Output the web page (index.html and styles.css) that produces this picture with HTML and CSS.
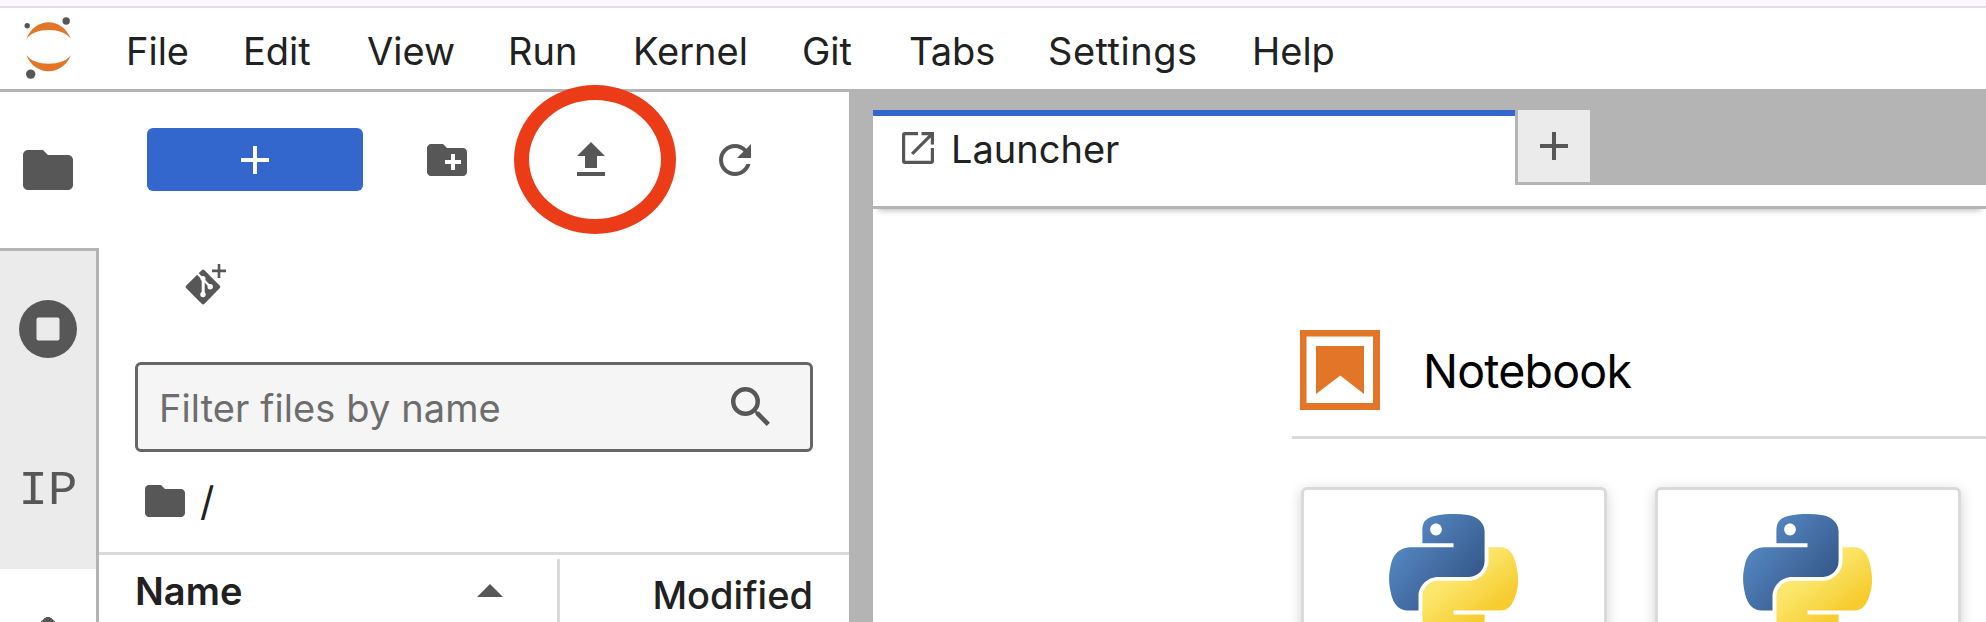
FILE: index.html
```html
<!DOCTYPE html>
<html lang="en">
<head>
<meta charset="utf-8">
<title>JupyterLab</title>
<link rel="stylesheet" href="styles.css">
</head>
<body>
<svg class="defs" width="0" height="0">
  <defs>
    <linearGradient id="blue" gradientUnits="userSpaceOnUse" x1="5" y1="8" x2="72" y2="64"><stop offset="0" stop-color="#5a8fca"/><stop offset="1" stop-color="#34578a"/></linearGradient>
    <linearGradient id="yellow" gradientUnits="userSpaceOnUse" x1="50" y1="58" x2="76" y2="92"><stop offset="0" stop-color="#fbe76d"/><stop offset="1" stop-color="#f6cc2f"/></linearGradient>
    <symbol id="python" viewBox="0 0 111 112">
      <path fill="url(#blue)" d="M54.919 0C50.335.022 45.958.413 42.106 1.095 30.76 3.099 28.7 7.295 28.7 15.032v10.219h26.813v3.406H18.638c-7.793 0-14.616 4.684-16.75 13.594-2.462 10.213-2.571 16.586 0 27.25 1.906 7.938 6.457 13.594 14.25 13.594h9.218v-12.25c0-8.85 7.657-16.656 16.75-16.656h26.782c7.455 0 13.406-6.139 13.406-13.625V15.032c0-7.266-6.13-12.725-13.406-13.937C64.282.328 59.502-.02 54.919 0zm-14.5 8.22c2.769 0 5.031 2.298 5.031 5.124 0 2.817-2.262 5.094-5.031 5.094-2.78 0-5.032-2.277-5.032-5.094 0-2.826 2.252-5.125 5.032-5.125z"/>
      <path fill="url(#yellow)" d="M85.638 28.657v11.906c0 9.231-7.826 17-16.75 17H42.106c-7.336 0-13.406 6.279-13.406 13.625V96.72c0 7.266 6.319 11.54 13.406 13.625 8.488 2.495 16.627 2.946 26.782 0 6.750-1.955 13.406-5.888 13.406-13.625V86.5H55.513v-3.406H95.7c7.792 0 10.696-5.435 13.406-13.594 2.8-8.399 2.68-16.476 0-27.25-1.926-7.757-5.604-13.593-13.406-13.593z"/>
    </symbol>
    <symbol id="folder" viewBox="2 4 20 16"><path d="M10 4H4c-1.100 0-1.990.9-1.990 2L2 18c0 1.100.9 2 2 2h16c1.100 0 2-.9 2-2V8c0-1.100-.9-2-2-2h-8l-2-2z"/></symbol>
  </defs>
</svg>
<div class="app">
  <div class="browser-edge"></div>
  <header class="menubar">
    <svg class="logo" viewBox="0 0 60 70">
      <path fill="#e27528" d="M6.300 26C10.500 15.500 19 9.300 28.600 9.300S46.700 15.500 51 26C46.500 20 38.500 17 28.600 17S11 20 6.300 26zM6.300 42C10.500 52.500 19 58.200 28.600 58.200S46.700 52.500 51 42C46.500 48 38.500 50.700 28.600 50.700S11 48 6.300 42z"/>
      <g fill="#575757"><circle cx="46.200" cy="8" r="3.700"/><circle cx="7.200" cy="12.700" r="2.700"/><circle cx="10.700" cy="61.100" r="4.700"/></g>
    </svg>
    <nav class="menu"><span class="m-file">File</span><span class="m-edit">Edit</span><span class="m-view">View</span><span class="m-run">Run</span><span class="m-kernel">Kernel</span><span class="m-git">Git</span><span class="m-tabs">Tabs</span><span class="m-settings">Settings</span><span class="m-help">Help</span></nav>
  </header>
  <main class="body">
    <aside class="rail">
      <div class="rail-item active"><svg class="ico rail-folder"><use href="#folder"/></svg></div>
      <div class="rail-item stop"><svg class="ico rail-stop" viewBox="0 0 58 58"><circle cx="29" cy="29" r="29"/><rect x="17.500" y="17.500" width="23" height="23" rx="2" fill="#ebebeb"/></svg></div>
      <div class="rail-item ip">IP</div>
      <div class="rail-item git"><svg class="ico rail-git" viewBox="2 2 20 20"><path d="M10.590 2.600c.78-.79 2.040-.79 2.820 0l7.990 7.990c.79.78.79 2.040 0 2.820l-7.990 7.990c-.78.79-2.040.79-2.820 0L2.600 13.410c-.79-.78-.79-2.040 0-2.820z"/></svg></div>
    </aside>
    <section class="files">
      <div class="toolbar">
        <button class="new"><svg viewBox="0 0 28 28"><path d="M12 0h4v12h12v4H16v12h-4V16H0v-4h12z"/></svg></button>
        <svg class="ico new-folder" viewBox="2 4 20 16"><path d="M20 6h-8l-2-2H4c-1.110 0-1.990.89-1.990 2L2 18c0 1.110.89 2 2 2h16c1.110 0 2-.89 2-2V8c0-1.110-.89-2-2-2zm-1 8h-3v3h-2v-3h-3v-2h3V9h2v3h3v2z"/></svg>
        <div class="upload"><svg class="ico" viewBox="5 3 14 17"><path d="M9 16h6v-6h4l-7-7-7 7h4zm-4 2h14v2H5z"/></svg><div class="highlight"></div></div>
        <svg class="ico refresh" viewBox="4 4 16 16"><path d="M17.650 6.350C16.200 4.900 14.210 4 12 4c-4.420 0-7.990 3.580-7.990 8s3.570 8 7.990 8c3.730 0 6.840-2.550 7.730-6h-2.080c-.82 2.330-3.040 4-5.650 4-3.310 0-6-2.690-6-6s2.690-6 6-6c1.660 0 3.140.69 4.220 1.780L13 11h7V4l-2.350 2.350z"/></svg>
      </div>
      <svg class="ico git-add" viewBox="0 0 42 42">
        <path d="M16.700 6.300a2 2 0 0 1 2.800 0L34.600 21.400a2 2 0 0 1 0 2.800L19.500 39.700a2 2 0 0 1-2.800 0L1.300 24.200a2 2 0 0 1 0-2.800z"/>
        <g fill="none" stroke="#fff" stroke-width="2.300"><path d="M11.500 8.500 25 22.500"/><path stroke-width="3" d="M18.200 14v16"/></g>
        <g fill="#fff"><circle cx="18" cy="14.500" r="2.500"/><circle cx="25.200" cy="22.800" r="2.700"/><circle cx="18" cy="30.500" r="2.700"/></g>
        <path d="M32.700 0h2.600v5.600H41v2.600h-5.700V14h-2.600V8.200H27V5.600h5.700z"/>
      </svg>
      <div class="filter"><span>Filter files by name</span><svg class="ico" viewBox="3 3 17.500 17.500"><path d="M15.500 14h-.79l-.28-.27A6.471 6.471 0 0 0 16 9.500 6.500 6.500 0 1 0 9.500 16c1.610 0 3.090-.59 4.230-1.570l.27.28v.79l5 4.990L20.490 19l-4.990-5zm-6 0C7.010 14 5 11.990 5 9.500S7.010 5 9.500 5 14 7.010 14 9.500 11.990 14 9.500 14z"/></svg></div>
      <div class="crumbs"><svg class="ico crumb-folder"><use href="#folder"/></svg><span>/</span></div>
      <div class="listing">
        <div class="col-name"><span>Name</span><svg class="ico" viewBox="0 0 26 13"><path d="M0 13 13 0l13 13z"/></svg></div>
        <div class="col-mod">Modified</div>
      </div>
    </section>
    <section class="dock">
      <div class="tabs">
        <div class="tab"><svg class="ico" viewBox="0 0 32 32"><path d="M16 0v3.200H3.200v25.600h25.600V16H32v13a3 3 0 0 1-3 3H3a3 3 0 0 1-3-3V3a3 3 0 0 1 3-3zM19.500 0H32v12.500h-3.200V5.500L11.300 23 9 20.700 26.500 3.200h-7z"/></svg><span>Launcher</span></div>
        <div class="add"><svg class="ico" viewBox="0 0 28 28"><path d="M12 0h4v12h12v4H16v12h-4V16H0v-4h12z"/></svg></div>
      </div>
      <div class="dock-bar"></div>
      <div class="launcher">
        <div class="section-head"><svg viewBox="0 0 81 81" fill="#e27528"><path fill-rule="evenodd" d="M1 1h80v80H1zM7.500 7.500v66.500h66.500V7.500z"/><path d="M17 17h48v48L41.300 46.500 17 65z"/></svg><span>Notebook</span></div>
        <div class="cards">
          <div class="card"><svg><use href="#python"/></svg></div>
          <div class="card"><svg><use href="#python"/></svg></div>
        </div>
      </div>
    </section>
  </main>
</div>
</body>
</html>
```
FILE: styles.css
```css
* { box-sizing: border-box; }
body { margin: 0; background: #fff; color: #212121; font: 430 38px/1.2 Inter, "Liberation Sans", sans-serif; }
svg { display: block; flex: none; }
span { white-space: nowrap; }
.defs { position: absolute; }
.ico { fill: #575757; }
.app { width: 1986px; height: 622px; overflow: hidden; display: flex; flex-direction: column; }
.browser-edge { flex: none; height: 8px; background: #fbf6ff; border-bottom: 2px solid #e1dce8; }
.menubar { flex: none; height: 84px; display: flex; border-bottom: 3px solid #b4b4b4; }
.logo { width: 60px; height: 70px; margin: 5px 0 0 20px; }
.menu { display: flex; margin-left: 46px; line-height: 86px; height: 81px; }
.menu span { flex: none; }
.m-file { width: 117px; }
.m-edit { width: 124px; }
.m-view { width: 141px; }
.m-run { width: 125px; }
.m-kernel { width: 169px; }
.m-git { width: 107px; }
.m-tabs { width: 139px; }
.m-settings { width: 204px; letter-spacing: .5px; }
.body { flex: 1; min-height: 0; display: flex; }

.rail { flex: none; width: 99px; display: flex; flex-direction: column; }
.rail-item { flex: none; display: flex; justify-content: center; border-right: 3px solid #b4b4b4; background: #ebebeb; }
.rail-item.active { height: 156px; padding-top: 58px; background: #fff; border-right-color: #fff; }
.rail-folder { width: 50px; height: 40px; }
.rail-item.stop { height: 160px; border-top: 3px solid #b4b4b4; padding-top: 49px; }
.rail-stop { width: 58px; height: 58px; }
.rail-item.ip { height: 161px; padding-top: 58px; font: 49px/50px "Liberation Mono", monospace; color: #575757; }
.rail-item.git { height: 60px; padding-top: 48px; background: #fff; }
.rail-git { width: 58px; height: 58px; }

.files { flex: none; width: 750px; display: flex; flex-direction: column; }
.toolbar { flex: none; height: 172px; display: flex; align-items: flex-start; padding: 36px 0 0 48px; }
.new { width: 216px; height: 63px; border: 0; border-radius: 6px; padding: 0; background: #3367cd; display: flex; align-items: center; justify-content: center; }
.new svg { width: 28px; height: 28px; fill: #fff; }
.new-folder { width: 40px; height: 32px; margin: 16px 0 0 64px; }
.upload { position: relative; width: 28px; margin: 14px 0 0 110px; }
.upload svg { width: 28px; height: 34px; }
.highlight { position: absolute; left: -63.500px; top: -57px; width: 162px; height: 149px; border: 15px solid #ec3b17; border-radius: 50%; }
.refresh { width: 32px; height: 32px; margin: 16px 0 0 114px; }
.git-add { width: 42px; height: 42px; margin-left: 86px; }
.filter { flex: none; width: 678px; height: 90px; margin: 56px 0 0 36px; border: 3px solid #666; border-radius: 6px; background: #f5f5f5; display: flex; align-items: center; justify-content: space-between; padding: 0 40px 0 21px; color: #6d6d6d; }
.filter span { margin-top: 3px; letter-spacing: .1px; }
.filter svg { width: 39px; height: 39px; margin-top: -1px; }
.crumbs { flex: none; height: 100px; display: flex; padding: 33px 0 0 46px; }
.crumb-folder { width: 40px; height: 32px; }
.crumbs span { margin: -7px 0 0 15px; font-size: 40px; }
.listing { flex: 1; border-top: 3px solid #dadada; display: flex; }
.col-name { width: 461px; margin-top: 4px; padding: 10px 54px 0 36px; border-right: 3px solid #dadada; display: flex; justify-content: space-between; font-weight: 620; }
.col-name svg { width: 26px; height: 13px; margin-top: 15px; }
.col-mod { flex: 1; padding: 18px 36px 0 0; text-align: right; font-weight: 530; }

.dock { flex: 1; min-width: 0; border-left: 24px solid #b4b4b4; display: flex; flex-direction: column; }
.tabs { flex: none; height: 93px; padding-top: 18px; background: #b4b4b4; display: flex; }
.tab { width: 642px; height: 75px; border-top: 6px solid #3367cd; background: #fff; display: flex; padding: 16px 0 0 29px; }
.tab svg { width: 32px; height: 32px; }
.tab span { margin: -5px 0 0 17px; }
.add { width: 69px; height: 72px; margin-left: 3px; background: #ebebeb; display: flex; align-items: center; justify-content: center; }
.add { width: 72px; }
.add svg { width: 28px; height: 28px; }
.dock-bar { flex: none; height: 24px; border-bottom: 3px solid #b4b4b4; box-shadow: 0 6px 6px -5px rgba(0, 0, 0, .3); background: #fff; }
.launcher { flex: 1; padding: 120px 0 0 419px; }
.section-head { height: 110px; border-bottom: 3px solid #dadada; padding-left: 7px; display: flex; color: #000; font-size: 46.500px; }
.section-head svg { width: 81px; height: 81px; }
.section-head span { margin: 15px 0 0 43px; letter-spacing: -.8px; }
.cards { display: flex; gap: 48px; padding: 48px 0 0 9px; }
.card { flex: none; width: 306px; height: 300px; border: 3px solid #dadada; border-radius: 6px; box-shadow: 0 3px 14px rgba(0, 0, 0, .18); padding: 24px 0 0 85px; background: #fff; }
.card svg { width: 129px; height: 130px; }
```
